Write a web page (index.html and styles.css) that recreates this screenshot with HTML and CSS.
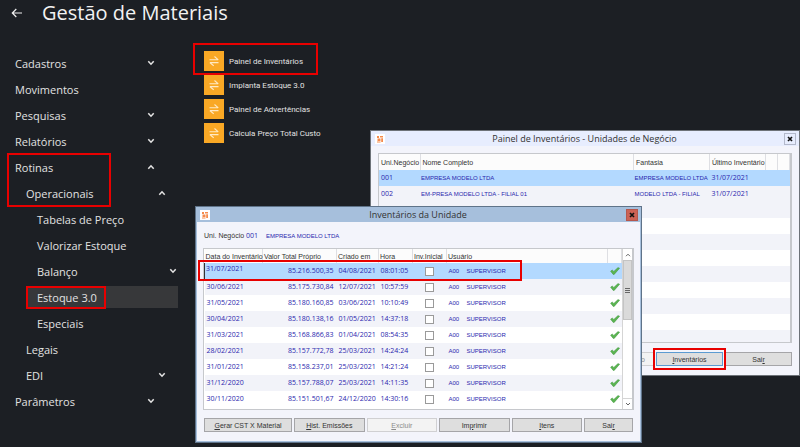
FILE: index.html
```html
<!DOCTYPE html>
<html lang="pt-BR">

<head>
    <meta charset="UTF-8" />
    <meta name="viewport" content="width=device-width, initial-scale=1.0" />
    <title>Gestão de Materiais</title>

    <link rel="stylesheet" href="styles.css">
</head>

<body>
    <!-- shared icons -->
    <svg class="sprite" aria-hidden="true">
        <symbol id="down" viewBox="0 0 8 6">
            <path d="M1.3 1.2 4 4.2 6.7 1.2" fill="none" stroke="#e4e4e4" stroke-width="1.5" />
        </symbol>
        <symbol id="up" viewBox="0 0 8 6">
            <path d="M1.3 4.8 4 1.8 6.7 4.8" fill="none" stroke="#e4e4e4" stroke-width="1.5" />
        </symbol>
        <symbol id="swap" viewBox="0 0 20 20">
            <path d="M5.5 8.8h8.5M10.5 5.5 14.3 8.8M14.5 11.6H6M5.8 11.6 9.7 14.8" fill="none" stroke="#ffe9c4" stroke-width="1.1" />
        </symbol>
        <symbol id="check" viewBox="0 0 10 8">
            <path d="M.6 4.2 2.2 3 3.8 4.4 8 .6 9.6 1.2 4.2 7.4 3.2 7.4Z" fill="#5cb551" stroke="#3f9440" stroke-width=".5" />
        </symbol>
        <symbol id="app" viewBox="0 0 10 10">
            <path d="M0 0h10v10H0z" fill="#fff" />
            <path d="M2 2h2v2H2zM5 2h3v1.5H5zM2.5 4.5h3V7h-3zM6.2 4.2H8V8H6.2zM2 7.5h3.5V8.5H2z" fill="#f58b4c" />
        </symbol>
        <symbol id="close" viewBox="0 0 12 12">
            <path d="M3.6 3.6 8.4 8.4M8.4 3.6 3.6 8.4" fill="none" stroke="#111" stroke-width="2" />
        </symbol>
    </svg>

    <header class="topbar">
        <button class="back" aria-label="Voltar">
            <svg viewBox="0 0 12 10"><path d="M11 5H1.5M5.3 1 1.3 5 5.3 9" fill="none" stroke="#f0f0f0" stroke-width="1.2" /></svg>
        </button>
        <h1>Gestão de Materiais</h1>
    </header>

    <main class="content">
        <nav class="menu">
            <ul>
                <li><button class="item">Cadastros <svg><use href="#down" /></svg></button></li>
                <li><a class="item" href="#">Movimentos</a></li>
                <li><button class="item">Pesquisas <svg><use href="#down" /></svg></button></li>
                <li><button class="item">Relatórios <svg><use href="#down" /></svg></button></li>
                <li class="marked">
                    <span class="mark mark-routines"></span>
                    <button class="item">Rotinas <svg><use href="#up" /></svg></button>
                    <ul>
                        <li>
                            <button class="item">Operacionais <svg><use href="#up" /></svg></button>
                            <ul>
                                <li><a class="item" href="#">Tabelas de Preço</a></li>
                                <li><a class="item" href="#">Valorizar Estoque</a></li>
                                <li><button class="item">Balanço <svg><use href="#down" /></svg></button></li>
                                <li class="marked">
                                    <a class="item active" href="#">Estoque 3.0</a>
                                    <span class="mark mark-stock"></span>
                                </li>
                                <li><a class="item" href="#">Especiais</a></li>
                            </ul>
                        </li>
                        <li><a class="item" href="#">Legais</a></li>
                        <li><button class="item">EDI <svg><use href="#down" /></svg></button></li>
                    </ul>
                </li>
                <li><button class="item">Parâmetros <svg><use href="#down" /></svg></button></li>
            </ul>
        </nav>

        <ul class="programs">
            <li class="marked"><a href="#"><svg><use href="#swap" /></svg>Painel de Inventários</a><span class="mark mark-program"></span></li>
            <li><a href="#"><svg><use href="#swap" /></svg>Implanta Estoque 3.0</a></li>
            <li><a href="#"><svg><use href="#swap" /></svg>Painel de Advertências</a></li>
            <li><a href="#"><svg><use href="#swap" /></svg>Calcula Preço Total Custo</a></li>
        </ul>
    </main>

    <section class="window units">
        <header class="titlebar">
            <svg class="logo"><use href="#app" /></svg>
            <h2>Painel de Inventários - Unidades de Negócio</h2>
            <button class="close" aria-label="Fechar"><svg><use href="#close" /></svg></button>
        </header>
        <div class="grid">
            <table>
                <colgroup>
                    <col class="c-unit"><col><col class="c-fantasy"><col class="c-last"><col class="c-tiny"><col class="c-tiny">
                </colgroup>
                <thead>
                    <tr><th>Uni.Negócio</th><th>Nome Completo</th><th>Fantasia</th><th>Último Inventário</th><th></th><th></th></tr>
                </thead>
                <tbody>
                    <tr class="selected"><td>001</td><td class="caps">EMPRESA MODELO LTDA</td><td class="caps">EMPRESA MODELO LTDA</td><td>31/07/2021</td><td></td><td></td></tr>
                    <tr><td>002</td><td class="caps">EM-PRESA MODELO LTDA - FILIAL 01</td><td class="caps">MODELO LTDA - FILIAL</td><td>31/07/2021</td><td></td><td></td></tr>
                </tbody>
            </table>
        </div>
        <div class="buttons">
            <button class="btn" disabled>Configuração</button>
            <div class="marked">
                <button class="btn focused"><u>I</u>nventários</button>
                <span class="mark mark-button"></span>
            </div>
            <button class="btn">Sai<u>r</u></button>
        </div>
    </section>

    <section class="window inventories">
        <header class="titlebar">
            <svg class="logo"><use href="#app" /></svg>
            <h2>Inventários da Unidade</h2>
            <button class="close" aria-label="Fechar"><svg><use href="#close" /></svg></button>
        </header>
        <p class="unit">Uni. Negócio <span>001</span> <span class="caps">EMPRESA MODELO LTDA</span></p>
        <div class="grid">
            <table>
                <colgroup>
                    <col class="c-date"><col class="c-value"><col class="c-created"><col class="c-hour"><col class="c-initial"><col><col class="c-check">
                </colgroup>
                <thead>
                    <tr><th>Data do Inventário</th><th>Valor Total Próprio</th><th>Criado em</th><th>Hora</th><th>Inv.Inicial</th><th>Usuário</th><th></th></tr>
                </thead>
                <tbody id="rows"></tbody>
            </table>
            <div class="scrollbar">
                <button aria-label="Subir"><svg viewBox="0 0 8 6"><path d="M2 4.2 4 2.2 6 4.2" fill="none" stroke="#666" /></svg></button>
                <div class="thumb"><i></i></div>
                <button aria-label="Descer"><svg viewBox="0 0 8 6"><path d="M2 2 4 4 6 2" fill="none" stroke="#666" /></svg></button>
            </div>
            <span class="mark mark-row"></span>
        </div>
        <div class="buttons">
            <button class="btn wide"><u>G</u>erar CST X Material</button>
            <button class="btn"><u>H</u>ist. Emissões</button>
            <button class="btn" disabled><u>E</u>xcluir</button>
            <button class="btn">Im<u>p</u>rimir</button>
            <button class="btn"><u>I</u>tens</button>
            <button class="btn small">Sai<u>r</u></button>
        </div>
    </section>

    <script>
        const inventories = [
            ["31/07/2021", "85.216.500,35", "04/08/2021", "08:01:05"],
            ["30/06/2021", "85.175.730,84", "12/07/2021", "10:57:59"],
            ["31/05/2021", "85.180.160,85", "03/06/2021", "10:10:49"],
            ["30/04/2021", "85.180.138,16", "01/05/2021", "14:37:18"],
            ["31/03/2021", "85.168.866,83", "01/04/2021", "08:54:35"],
            ["28/02/2021", "85.157.772,78", "25/03/2021", "14:24:24"],
            ["31/01/2021", "85.158.237,01", "25/03/2021", "14:21:24"],
            ["31/12/2020", "85.157.788,07", "25/03/2021", "14:11:35"],
            ["30/11/2020", "85.151.501,67", "24/12/2020", "14:30:16"]
        ];

        document.getElementById("rows").innerHTML = inventories.map(([date, value, created, hour], i) => `
            <tr class="${i === 0 ? "selected" : ""}">
                <td class="date">${date}</td>
                <td class="value">${value}</td>
                <td>${created}</td>
                <td>${hour}</td>
                <td class="initial"><input type="checkbox" aria-label="Inv.Inicial ${date}"></td>
                <td class="caps user"><span>A00</span>SUPERVISOR</td>
                <td class="check"><svg><use href="#check" /></svg></td>
            </tr>`).join("");
    </script>
</body>

</html>
```

FILE: styles.css
```css
* {
    box-sizing: border-box;
}

body {
    margin: 0;
    min-height: 100vh;
    position: relative;
    overflow: hidden;
    background: #1c1f24;
    color: #e2e2e2;
    font-family: "Open Sans", "Noto Sans", sans-serif;
    font-size: 12px;
}

ul {
    list-style: none;
    margin: 0;
    padding: 0;
}

button {
    font: inherit;
    color: inherit;
    padding: 0;
    border: none;
    background: none;
}

a {
    color: inherit;
    text-decoration: none;
}

.sprite {
    position: absolute;
    width: 0;
    height: 0;
}

/* red highlight frames */
.marked {
    position: relative;
}

.mark {
    position: absolute;
    border: 2px solid #e80000;
    pointer-events: none;
}

.mark-routines {
    left: 3px;
    top: -3px;
    width: 104px;
    height: 54px;
}

.mark-stock {
    left: 0;
    top: 0;
    width: 80px;
    height: 23px;
}

.mark-program {
    left: -11px;
    top: -8px;
    width: 125px;
    height: 32px;
}

.mark-button {
    inset: -4px -3px;
}

.mark-row {
    left: -6px;
    top: 11px;
    width: 324px;
    height: 21px;
}

/* page */
.topbar {
    display: flex;
    align-items: center;
    gap: 19px;
    height: 25px;
    padding-left: 11px;
}

.back svg {
    display: block;
    width: 12px;
    height: 10px;
}

h1 {
    margin: 0;
    font-size: 20px;
    font-weight: 400;
    color: #f2f2f2;
}

.content {
    display: flex;
    align-items: flex-start;
    gap: 26px;
    padding-top: 26px;
}

.menu {
    width: 178px;
    padding: 1px 0 0 4px;
}

.menu ul ul {
    margin-left: 11px;
}

.item {
    display: flex;
    align-items: center;
    justify-content: space-between;
    width: 152px;
    height: 22px;
    margin-bottom: 4px;
    padding: 0 1px 0 11px;
    font-size: 11px;
    white-space: nowrap;
}

.item svg {
    width: 8px;
    height: 6px;
}

.item.active {
    background: #37383a;
}

.programs {
    display: flex;
    flex-direction: column;
    gap: 4px;
    font-family: Roboto, "Open Sans", sans-serif;
    font-size: 8px;
}

.programs a {
    display: flex;
    align-items: center;
    gap: 5px;
}

.programs svg {
    width: 20px;
    height: 20px;
    background: #f9a825;
}

/* windows */
.window {
    position: absolute;
    display: flex;
    flex-direction: column;
    background: #f3f4fb;
    color: #333;
    font-family: "Liberation Sans", Arial, sans-serif;
    font-size: 7px;
}

.units {
    left: 370px;
    top: 130px;
    width: 430px;
    height: 246px;
    border: 1px solid #6d7278;
}

.inventories {
    left: 195px;
    top: 206px;
    width: 447px;
    height: 237px;
    border: 1px solid #5f7389;
    box-shadow: inset 0 0 0 1px #a6bfdc;
}

.titlebar {
    display: flex;
    align-items: center;
    height: 15px;
    padding: 0 3px 0 4px;
    background: #e7edfe;
}

.inventories .titlebar {
    background: #a6bfdc;
}

.logo {
    width: 10px;
    height: 10px;
}

h2 {
    flex: 1;
    margin: 0;
    text-align: center;
    font-family: "Open Sans", "Noto Sans", sans-serif;
    font-size: 9px;
    font-weight: 400;
}

.close {
    width: 12px;
    height: 12px;
    border: 1px solid #b3b9cb;
}

.close svg {
    display: block;
    width: 10px;
    height: 10px;
}

.inventories .close {
    background: #cc6255;
    border-color: #b5574d;
}

.unit {
    margin: 9px 8px 7px;
    line-height: 10px;
}

.unit span {
    color: #2a1fae;
    font-family: "Open Sans", "Noto Sans", sans-serif;
}

.unit .caps {
    margin-left: 6px;
}

.grid {
    position: relative;
    display: flex;
    align-items: flex-start;
    flex: 1;
    margin: 0 7px;
    border: 1px solid #c6c8cc;
    border-width: 1px 2px 1px 1px;
    background: #fff;
}

.units .grid {
    margin-top: 7px;
    background: repeating-linear-gradient(#fff 0 16px, #f2f3f9 16px 32px);
}

table {
    flex: 1;
    width: 100%;
    table-layout: fixed;
    border-collapse: collapse;
}

th {
    height: 14px;
    padding: 0 2px;
    border-right: 1px solid #dedfe3;
    background: #fcfcfc;
    font-weight: 400;
    text-align: left;
    white-space: nowrap;
}

.inventories th {
    padding: 0 1px;
}

.units th {
    height: 16px;
}

td {
    height: 16px;
    padding: 0 2px;
    color: #2a1fae;
    font-family: "Open Sans", "Noto Sans", sans-serif;
    line-height: 10px;
    white-space: nowrap;
}

tbody tr:nth-child(even) {
    background: #f2f3f9;
}

tbody tr.selected {
    background: #b3d9ff;
}

.window .caps {
    font-family: "Liberation Sans", Arial, sans-serif;
    font-size: 6px;
}

.units td.caps {
    padding: 0 1px;
}

.c-unit { width: 41px; }
.c-fantasy { width: 76px; }
.c-last { width: 56px; }
.c-tiny { width: 12px; }
.c-date { width: 58px; }
.c-value { width: 74px; }
.c-created { width: 42px; }
.c-hour { width: 34px; }
.c-initial { width: 34px; }
.c-check { width: 14px; }

.selected .date {
    padding-bottom: 4px;
    border-left: 1px solid #333;
    padding-left: 1px;
}

.value {
    padding-right: 3px;
    text-align: right;
}

.initial {
    text-align: center;
}

.initial input {
    display: block;
    appearance: none;
    width: 9px;
    height: 9px;
    margin: 0 auto;
    border: 1px solid #9a9a9a;
    background: #fff;
}

.user span {
    display: inline-block;
    width: 18px;
}

.check svg {
    display: block;
    width: 10px;
    height: 8px;
}

.scrollbar {
    display: flex;
    flex-direction: column;
    align-self: stretch;
    width: 10px;
    background: #fff;
    border: 1px solid #d5d5d5;
    border-width: 0 0 0 1px;
}

.scrollbar button {
    height: 11px;
}

.scrollbar button:last-child {
    margin-top: auto;
    border-top: 1px solid #d5d5d5;
}

.scrollbar svg {
    display: block;
    width: 8px;
    height: 6px;
    margin: auto;
}

.thumb {
    display: flex;
    align-items: center;
    justify-content: center;
    height: 60px;
    background: #dadada;
    border: 1px solid #c4c4c4;
}

.thumb i {
    width: 5px;
    height: 5px;
    background: repeating-linear-gradient(#666 0 1px, #dadada 1px 2px);
}

.buttons {
    display: flex;
    gap: 2px;
    margin: 8px 8px 10px;
}

.units .buttons {
    justify-content: flex-end;
    margin: 9px 7px;
}

.btn {
    flex: 70;
    height: 14px;
    border: 1px solid #a5a5a8;
    background: #dedede;
    white-space: nowrap;
}

.btn.wide {
    flex: 88;
}

.btn.small {
    flex: 48;
}

.units .btn {
    flex: none;
    display: block;
    width: 67px;
}

.btn:disabled {
    color: #8b8b8b;
    background: #f3f3f3;
    border-color: #d0d0d2;
}

.units .btn:disabled {
    padding-right: 8px;
    text-align: right;
}

.btn.focused {
    border-color: #5c9bd1;
}
```
